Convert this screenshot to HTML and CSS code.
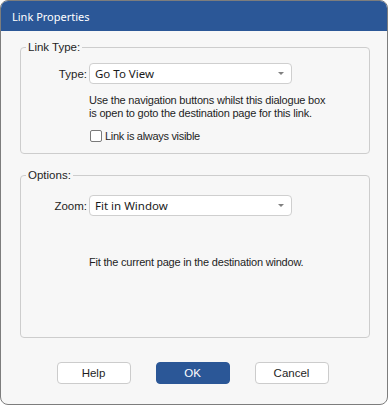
FILE: index.html
```html
<!DOCTYPE html>
<html>
<head>
<meta charset="utf-8">
<link rel="stylesheet" href="styles.css">
</head>
<body>
<div class="window">
  <div class="titlebar">Link Properties</div>
  <div class="content">
    <fieldset class="group group-type">
      <legend>Link Type:</legend>
      <div class="row">
        <label class="label">Type:</label>
        <div class="combo"><span>Go To View</span><span class="arrow"></span></div>
      </div>
      <p class="desc">Use the navigation buttons whilst this dialogue box<br>is open to goto the destination page for this link.</p>
      <label class="check"><span class="box"></span>Link is always visible</label>
    </fieldset>
    <fieldset class="group group-options">
      <legend>Options:</legend>
      <div class="row">
        <label class="label">Zoom:</label>
        <div class="combo"><span>Fit in Window</span><span class="arrow"></span></div>
      </div>
      <p class="desc desc-zoom">Fit the current page in the destination window.</p>
    </fieldset>
    <div class="buttons">
      <button class="btn">Help</button>
      <button class="btn btn-primary">OK</button>
      <button class="btn">Cancel</button>
    </div>
  </div>
</div>
</body>
</html>
```
FILE: styles.css
```css
html, body {
  margin: 0;
  padding: 0;
  background: #ffffff;
}
body {
  width: 388px;
  height: 405px;
  font-family: "Liberation Sans", Arial, sans-serif;
  font-size: 11px;
  color: #1e1e1e;
}
.window {
  box-sizing: border-box;
  width: 388px;
  height: 405px;
  border: 1px solid #7d7d7d;
  border-radius: 8px;
  overflow: hidden;
  background: #f7f7f7;
  display: flex;
  flex-direction: column;
}
.titlebar {
  height: 30px;
  background: #2b5797;
  color: #ffffff;
  font-family: "Noto Sans", sans-serif;
  font-size: 11px;
  padding-left: 11px;
  display: flex;
  align-items: center;
  flex-shrink: 0;
}
.content {
  padding: 9px 17px 0 19px;
  display: flex;
  flex-direction: column;
}
.group {
  margin: 0;
  border: 1px solid #cdcdcd;
  border-radius: 4px;
  padding: 0;
  box-sizing: border-box;
}
.group legend {
  padding: 0 2px;
  margin-left: 5px;
  font-size: 11.5px;
  line-height: 14px;
  color: #1e1e1e;
}
.group-type {
  height: 114px;
  padding-top: 9px;
}
.group-options {
  margin-top: 14px;
  height: 170px;
  padding-top: 13px;
}
.row {
  display: flex;
  align-items: center;
  gap: 2px;
}
.label {
  width: 66px;
  text-align: right;
  font-size: 11.5px;
}
.combo {
  box-sizing: border-box;
  width: 203px;
  height: 21px;
  border: 1px solid #cfcfcf;
  border-radius: 4px;
  background: #ffffff;
  display: flex;
  align-items: center;
  justify-content: space-between;
  padding: 0 7px 0 5px;
  font-family: "Noto Sans", sans-serif;
  font-size: 11.5px;
  color: #1a1a1a;
}
.arrow {
  width: 0;
  height: 0;
  border-left: 3px solid transparent;
  border-right: 3px solid transparent;
  border-top: 3px solid #808080;
}
.desc {
  margin: 10px 0 0 68px;
  line-height: 13px;
  font-size: 11px;
  letter-spacing: -0.2px;
}
.desc-zoom {
  margin-top: 40px;
}
.check {
  display: flex;
  align-items: center;
  gap: 3px;
  margin: 10px 0 0 69px;
  font-size: 11px;
  letter-spacing: -0.3px;
}
.box {
  box-sizing: border-box;
  width: 12px;
  height: 12px;
  border: 1px solid #7a7a7a;
  border-radius: 2px;
  background: #ffffff;
}
.buttons {
  display: flex;
  justify-content: center;
  gap: 25px;
  margin-top: 24px;
  padding-right: 5px;
}
.btn {
  box-sizing: border-box;
  width: 74px;
  height: 22px;
  border: 1px solid #cccccc;
  border-radius: 4px;
  background: #ffffff;
  font-family: "Liberation Sans", Arial, sans-serif;
  font-size: 11.5px;
  color: #1e1e1e;
  padding: 0;
}
.btn-primary {
  background: #2b5797;
  border-color: #2b5797;
  color: #ffffff;
}
```
